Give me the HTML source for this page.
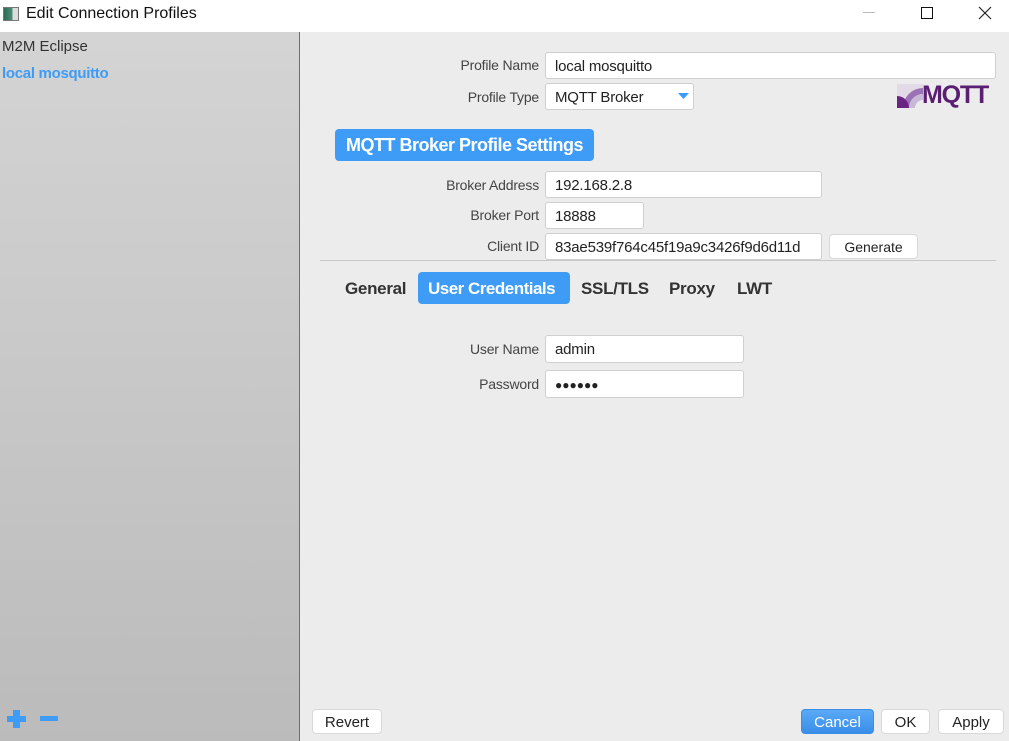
<!DOCTYPE html>
<html><head><meta charset="utf-8"><style>
*{box-sizing:border-box;margin:0;padding:0}
body{width:1009px;height:741px;overflow:hidden;font-family:"Liberation Sans","DejaVu Sans",sans-serif;background:#ececec;position:relative;color:#333}
.abs{position:absolute}
.title{left:0;top:0;width:1009px;height:32px;background:#fff}
.left{left:0;top:32px;width:299px;height:709px;background:linear-gradient(#d4d4d4,#bbbbbb)}
.div{left:299px;top:32px;width:1px;height:709px;background:#6e6e6e}
.lbl{font-size:14px;color:#444;text-align:right;width:200px;letter-spacing:-0.2px}
.fld{background:#fff;border:1px solid #cfcfcf;border-radius:3px;font-size:15px;color:#222;padding:1px 9px 0;display:flex;align-items:center;letter-spacing:-0.2px}
.btn{background:#fff;border:1px solid #d8d8d8;border-radius:4px;font-size:15px;color:#222;display:flex;align-items:center;justify-content:center;padding-top:1px}
.tab{font-size:17px;font-weight:bold;color:#333;top:279px;letter-spacing:-0.3px}
</style></head><body>
<div class="abs title">
 <div class="abs" style="left:3px;top:7px;width:16px;height:14px;border:1px solid #777;background:linear-gradient(90deg,#2f6a55 0,#4d8f7a 60%,#ddd 60%)"></div>
 <div class="abs" style="left:26px;top:5px;font-size:16px;color:#111">Edit Connection Profiles</div>
 <div class="abs" style="left:863px;top:12px;width:12px;height:1px;background:#bbb"></div>
 <div class="abs" style="left:921px;top:7px;width:12px;height:12px;border:1.3px solid #111"></div>
 <svg class="abs" style="left:978px;top:6px" width="14" height="14"><path d="M1 1L13 13M13 1L1 13" stroke="#222" stroke-width="1.2"/></svg>
</div>
<div class="abs left">
 <div class="abs" style="left:2px;top:6px;font-size:15px;color:#333">M2M Eclipse</div>
 <div class="abs" style="left:2px;top:33px;font-size:15px;color:#3c9cf6;font-weight:bold;letter-spacing:-0.3px">local mosquitto</div>
 <div class="abs" style="left:7px;top:684px;width:19px;height:6px;background:#3f9cf6"></div>
 <div class="abs" style="left:13px;top:678px;width:7px;height:18px;background:#3f9cf6"></div>
 <div class="abs" style="left:40px;top:684px;width:18px;height:5px;background:#3f9cf6"></div>
</div>
<div class="abs div"></div>

<div class="abs lbl" style="left:339px;top:57px">Profile Name</div>
<div class="abs fld" style="left:545px;top:52px;width:451px;height:27px">local mosquitto</div>
<div class="abs lbl" style="left:339px;top:89px">Profile Type</div>
<div class="abs fld" style="left:545px;top:83px;width:149px;height:27px">MQTT Broker</div>
<svg class="abs" style="left:678px;top:93px" width="11" height="6"><path d="M0 0H11L5.5 6Z" fill="#3c9cf6"/></svg>
<div class="abs" style="left:897px;top:84px;width:100px;height:24px">
 <svg class="abs" style="left:0;top:0" width="26" height="24"><path d="M0 24V0H26V4A20 20 0 0 0 6 24Z" fill="#dcd0e4" opacity=".6"/><path d="M6 24A20 20 0 0 1 26 4V10A14 14 0 0 0 12 24Z" fill="#9c72b6"/><path d="M12 24A14 14 0 0 1 26 10V16A8 8 0 0 0 18 24Z" fill="#c9b7d6"/><path d="M0 24V12A12 12 0 0 1 12 24Z" fill="#6a2583"/></svg>
 <div class="abs" style="left:25px;top:-3px;font-size:25px;font-weight:bold;color:#5a1f72;letter-spacing:-1.2px;font-family:'Liberation Sans',sans-serif">MQTT</div>
</div>

<div class="abs" style="left:335px;top:129px;width:259px;height:32px;background:#3f9cf6;border-radius:4px;color:#fff;font-size:18px;font-weight:bold;display:flex;align-items:center;justify-content:center;letter-spacing:-0.5px;padding-top:1px">MQTT Broker Profile Settings</div>

<div class="abs lbl" style="left:339px;top:177px">Broker Address</div>
<div class="abs fld" style="left:545px;top:171px;width:277px;height:27px">192.168.2.8</div>
<div class="abs lbl" style="left:339px;top:207px">Broker Port</div>
<div class="abs fld" style="left:545px;top:202px;width:99px;height:27px">18888</div>
<div class="abs lbl" style="left:339px;top:238px">Client ID</div>
<div class="abs fld" style="left:545px;top:233px;width:277px;height:27px;overflow:hidden;white-space:nowrap">83ae539f764c45f19a9c3426f9d6d11d</div>
<div class="abs btn" style="left:829px;top:234px;width:89px;height:25px;font-size:14px">Generate</div>
<div class="abs" style="left:320px;top:260px;width:676px;height:1px;background:#c8c8c8"></div>

<div class="abs tab" style="left:345px">General</div>
<div class="abs" style="left:418px;top:272px;width:152px;height:32px;background:#3f9cf6;border-radius:4px"></div>
<div class="abs tab" style="left:428px;color:#fff;letter-spacing:-0.5px">User Credentials</div>
<div class="abs tab" style="left:581px">SSL/TLS</div>
<div class="abs tab" style="left:669px">Proxy</div>
<div class="abs tab" style="left:737px">LWT</div>

<div class="abs lbl" style="left:339px;top:341px">User Name</div>
<div class="abs fld" style="left:545px;top:335px;width:199px;height:28px">admin</div>
<div class="abs lbl" style="left:339px;top:376px">Password</div>
<div class="abs fld" style="left:545px;top:370px;width:199px;height:28px;font-size:12px;letter-spacing:0">●●●●●●</div>

<div class="abs btn" style="left:312px;top:709px;width:70px;height:25px">Revert</div>
<div class="abs btn" style="left:801px;top:709px;width:73px;height:25px;background:linear-gradient(#5aa9f7,#3a8ee8);border-color:#3a8ee8;color:#fff">Cancel</div>
<div class="abs btn" style="left:881px;top:709px;width:49px;height:25px">OK</div>
<div class="abs btn" style="left:938px;top:709px;width:66px;height:25px">Apply</div>
</body></html>
